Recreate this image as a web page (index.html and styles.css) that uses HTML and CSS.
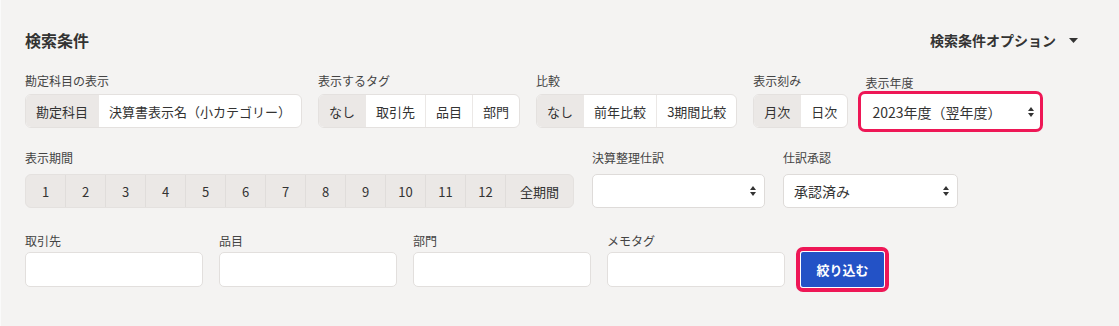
FILE: index.html
```html
<!DOCTYPE html>
<html lang="ja">
<head>
  <meta charset="UTF-8">
  <title>検索条件</title>
  <link rel="stylesheet" href="styles.css">
</head>
<body>

  <div class="panel">
    <div class="header">
      <h2 class="title">検索条件</h2>
      <div class="options">検索条件オプション
        <svg class="caret" viewBox="0 0 9 5"><path d="M0 0h9L4.5 5z" fill="#333"/></svg>
      </div>
    </div>

    <div class="row row-top">
      <div class="field">
        <div class="label">勘定科目の表示</div>
        <div class="seg"><span class="on">勘定科目</span><span>決算書表示名（小カテゴリー）</span></div>
      </div>
      <div class="field">
        <div class="label">表示するタグ</div>
        <div class="seg"><span class="on">なし</span><span>取引先</span><span>品目</span><span>部門</span></div>
      </div>
      <div class="field">
        <div class="label">比較</div>
        <div class="seg"><span class="on">なし</span><span>前年比較</span><span>3期間比較</span></div>
      </div>
      <div class="field">
        <div class="label">表示刻み</div>
        <div class="seg"><span class="on">月次</span><span>日次</span></div>
      </div>
      <div class="field field-year">
        <div class="label">表示年度</div>
        <div class="select-wrap">
          <select class="select select-year"><option>2023年度（翌年度）</option></select>
          <svg class="arrows" viewBox="0 0 6 10"><path d="M0 4L3 0L6 4zM0 6L3 10L6 6z" fill="#333"/></svg>
        </div>
      </div>
    </div>

    <div class="row row-mid">
      <div class="field">
        <div class="label">表示期間</div>
        <div class="seg period">
          <span>1</span><span>2</span><span>3</span><span>4</span><span>5</span><span>6</span>
          <span>7</span><span>8</span><span>9</span><span>10</span><span>11</span><span>12</span><span>全期間</span>
        </div>
      </div>
      <div class="field">
        <div class="label">決算整理仕訳</div>
        <div class="select-wrap">
          <select class="select select-adj"><option></option></select>
          <svg class="arrows" viewBox="0 0 6 10"><path d="M0 4L3 0L6 4zM0 6L3 10L6 6z" fill="#333"/></svg>
        </div>
      </div>
      <div class="field">
        <div class="label">仕訳承認</div>
        <div class="select-wrap">
          <select class="select select-approve"><option>承認済み</option></select>
          <svg class="arrows" viewBox="0 0 6 10"><path d="M0 4L3 0L6 4zM0 6L3 10L6 6z" fill="#333"/></svg>
        </div>
      </div>
    </div>

    <div class="row row-bottom">
      <div class="field">
        <div class="label">取引先</div>
        <input type="text" class="text-input">
      </div>
      <div class="field">
        <div class="label">品目</div>
        <input type="text" class="text-input">
      </div>
      <div class="field">
        <div class="label">部門</div>
        <input type="text" class="text-input">
      </div>
      <div class="field">
        <div class="label">メモタグ</div>
        <input type="text" class="text-input">
      </div>
      <div class="btn-mark">
        <button type="button" class="btn-filter">絞り込む</button>
      </div>
    </div>
  </div>

</body>
</html>
```

FILE: styles.css
```css
body { margin: 0; background: #f4f3f2; font-family: "Noto Sans CJK JP", "Noto Sans", sans-serif; color: #333; }
.panel { height: 326px; box-sizing: border-box; padding: 29px 24px 0 24px; border-left: 1px solid #fafafa; }

.header { display: flex; align-items: center; justify-content: space-between; height: 22px; }
.title { margin: 0; font-size: 16px; font-weight: bold; line-height: 22px; }
.options { display: flex; align-items: center; font-size: 14px; font-weight: bold; margin-right: 17px; }
.caret { width: 9px; height: 5px; margin-left: 13px; }

.row { display: flex; align-items: flex-start; }
.row-top { margin-top: 21px; gap: 16px; }
.row-mid { margin-top: 17px; gap: 18px; }
.row-bottom { margin-top: 24px; gap: 16px; }

.label { font-size: 12px; line-height: 17px; color: #444; margin-bottom: 5px; white-space: nowrap; }
.row-mid .label { margin-bottom: 8px; }
.row-bottom .label { margin-bottom: 3px; }

.seg { display: flex; height: 34px; box-sizing: border-box; border: 1px solid #e4e1df; border-radius: 6px; overflow: hidden; background: #fff; font-size: 13px; }
.seg span { display: flex; align-items: center; padding: 0 10px; border-left: 1px solid #ebe8e6; white-space: nowrap; }
.seg span:first-child { border-left: none; }
.seg .on { background: #ebe8e6; }

.period { background: #ebe8e6; }
.period span { width: 40px; padding: 0; justify-content: center; box-sizing: border-box; border-left-color: #e0dddb; }
.period span:first-child { width: 39px; }
.period span:last-child { width: 68px; }

.field-year { margin-left: -6px; }
.field-year .label { padding-left: 7px; margin-top: 2px; margin-bottom: 0; }

.select-wrap { position: relative; }
.select { display: block; appearance: none; -webkit-appearance: none; box-sizing: border-box; height: 34px; background: #fff; border: 1px solid #dedbd9; border-radius: 5px; padding: 0 24px 0 10px; font-family: inherit; font-size: 14px; color: #333; outline: none; }
.select-year { width: 185px; height: 41px; border: 3px solid #ee1756; border-radius: 7px; padding-left: 11px; }
.select-adj { width: 173px; }
.select-approve { width: 175px; }
.arrows { position: absolute; right: 9px; top: 50%; width: 6px; height: 10px; margin-top: -5px; }

.text-input { display: block; box-sizing: border-box; width: 178px; height: 35px; background: #fff; border: 1px solid #e2dfdd; border-radius: 5px; outline: none; }

.btn-mark { margin-top: 15px; margin-left: -5px; border: 4px solid #ee1756; border-radius: 7px; background: #fff; }
.btn-filter { display: block; width: 85px; height: 37px; box-sizing: border-box; border: 1px solid #fff; border-radius: 3px; background: #2352c6; color: #fff; font-family: inherit; font-size: 13px; font-weight: bold; padding: 0; }
```
